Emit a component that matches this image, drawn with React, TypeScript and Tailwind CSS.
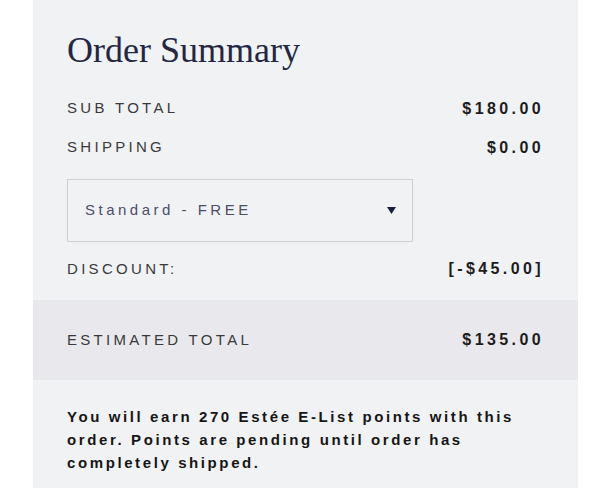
const rows = [
  { label: "SUB TOTAL", value: "$180.00" },
  { label: "SHIPPING", value: "$0.00" },
];

function Row({ label, value }: { label: string; value: string }) {
  return (
    <div className="flex h-[39px] items-center justify-between">
      <span className="text-[15px] tracking-[3.3px] text-[#3a3a3a]">{label}</span>
      <span className="text-[16px] font-bold tracking-[3.4px] text-[#1c1c1c]">{value}</span>
    </div>
  );
}

export default function App() {
  return (
    <div className="h-[488px] w-[600px] overflow-hidden bg-white font-['Liberation_Sans',Arial,sans-serif]">
      <div className="ml-[33px] h-full w-[545px] bg-[#f1f2f4]">
        <div className="px-[34px]">
          <h2 className="pt-[30px] pb-[19px] font-['Liberation_Serif',serif] text-[36px] leading-[40px] text-[#232744]">
            Order Summary
          </h2>
          {rows.map((r) => (
            <Row key={r.label} {...r} />
          ))}
          <div className="mt-[12px] flex h-[63px] w-[346px] items-center justify-between border border-[#cfd0d5] pl-[17px] pr-[16px]">
            <span className="text-[15px] tracking-[3.5px] text-[#4b4d6b]">Standard - FREE</span>
            <svg width="9" height="7" viewBox="0 0 9 7" aria-hidden="true">
              <polygon points="0,0 9,0 4.5,7" fill="#1b1f3f" />
            </svg>
          </div>
          <div className="mt-[8px] flex h-[38px] items-center justify-between">
            <span className="text-[15px] tracking-[3.3px] text-[#3a3a3a]">DISCOUNT:</span>
            <span className="text-[16px] font-bold tracking-[3.4px] text-[#1c1c1c]">[-$45.00]</span>
          </div>
        </div>
        <div className="mt-[12px] flex h-[80px] items-center justify-between bg-[#e9e9ed] px-[34px]">
          <span className="text-[15px] tracking-[3.3px] text-[#3a3a3a]">ESTIMATED TOTAL</span>
          <span className="text-[16px] font-bold tracking-[3.4px] text-[#1c1c1c]">$135.00</span>
        </div>
        <p className="pl-[34px] pr-[40px] pt-[25px] text-[15px] font-bold leading-[23px] tracking-[2.6px] text-[#161616]">
          You will earn 270 Estée E-List points with this order. Points are pending until order has completely shipped.
        </p>
      </div>
    </div>
  );
}
